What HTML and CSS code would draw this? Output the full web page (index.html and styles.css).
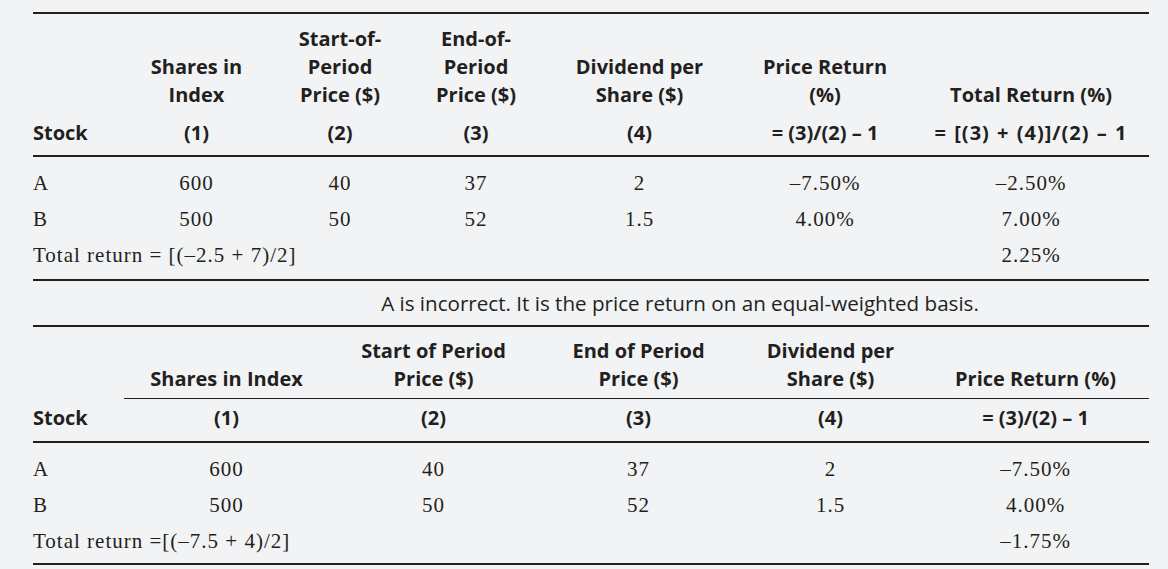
FILE: index.html
```html
<!DOCTYPE html>
<html lang="en">
<head>
<meta charset="utf-8">
<title>Index returns</title>
<link rel="stylesheet" href="styles.css">
</head>
<body>
<div class="page">
  <table class="tbl tbl-top">
    <colgroup>
      <col class="w90"><col class="w147"><col class="w140"><col class="w132"><col class="w195"><col class="w176"><col class="w236">
    </colgroup>
    <thead>
      <tr class="h1">
        <th></th>
        <th>Shares in<br>Index</th>
        <th>Start-of-<br>Period<br>Price ($)</th>
        <th>End-of-<br>Period<br>Price ($)</th>
        <th>Dividend per<br>Share ($)</th>
        <th>Price Return<br>(%)</th>
        <th>Total Return (%)</th>
      </tr>
      <tr class="h2">
        <th class="left">Stock</th>
        <th>(1)</th>
        <th>(2)</th>
        <th>(3)</th>
        <th>(4)</th>
        <th>= (3)/(2) – 1</th>
        <th class="wide">= [(3) + (4)]/(2) – 1</th>
      </tr>
    </thead>
    <tbody>
      <tr>
        <td class="left">A</td><td>600</td><td>40</td><td>37</td><td>2</td><td>–7.50%</td><td>–2.50%</td>
      </tr>
      <tr>
        <td class="left">B</td><td>500</td><td>50</td><td>52</td><td>1.5</td><td>4.00%</td><td>7.00%</td>
      </tr>
      <tr>
        <td class="left" colspan="6">Total return = [(–2.5 + 7)/2]</td><td>2.25%</td>
      </tr>
    </tbody>
  </table>

  <p class="note">A is incorrect. It is the price return on an equal-weighted basis.</p>

  <table class="tbl tbl-bottom">
    <colgroup>
      <col class="w91"><col class="w205"><col class="w209"><col class="w201"><col class="w183"><col class="w227">
    </colgroup>
    <thead>
      <tr class="h1">
        <th class="noline"></th>
        <th>Shares in Index</th>
        <th>Start of Period<br>Price ($)</th>
        <th>End of Period<br>Price ($)</th>
        <th>Dividend per<br>Share ($)</th>
        <th>Price Return (%)</th>
      </tr>
      <tr class="h2">
        <th class="left">Stock</th>
        <th>(1)</th>
        <th>(2)</th>
        <th>(3)</th>
        <th>(4)</th>
        <th>= (3)/(2) – 1</th>
      </tr>
    </thead>
    <tbody>
      <tr>
        <td class="left">A</td><td>600</td><td>40</td><td>37</td><td>2</td><td>–7.50%</td>
      </tr>
      <tr>
        <td class="left">B</td><td>500</td><td>50</td><td>52</td><td>1.5</td><td>4.00%</td>
      </tr>
      <tr>
        <td class="left" colspan="5">Total return =[(–7.5 + 4)/2]</td><td>–1.75%</td>
      </tr>
    </tbody>
  </table>
</div>
</body>
</html>
```

FILE: styles.css
```css
html, body {
  margin: 0;
  padding: 0;
  background: #f2f3f5;
}

body {
  color: #231f20;
  font-family: "Open Sans", "Liberation Sans", sans-serif;
}

.page {
  width: 1116px;
  padding: 12px 0 0 33px;
}

.tbl {
  width: 1116px;
  table-layout: fixed;
  border-collapse: separate;
  border-spacing: 0;
  border-top: 2px solid #231f20;
}

.w90 { width: 90px; }
.w147 { width: 147px; }
.w140 { width: 140px; }
.w132 { width: 132px; }
.w195 { width: 195px; }
.w176 { width: 176px; }
.w236 { width: 236px; }

.w91 { width: 91px; }
.w205 { width: 205px; }
.w209 { width: 209px; }
.w201 { width: 201px; }
.w183 { width: 183px; }
.w227 { width: 227px; }

.tbl th {
  font-family: "Open Sans", "Liberation Sans", sans-serif;
  font-weight: 700;
  font-size: 20px;
  line-height: 28px;
  text-align: center;
  vertical-align: bottom;
  padding: 0;
  white-space: nowrap;
}

.tbl th.wide {
  word-spacing: 1px;
  letter-spacing: 1px;
}

.tbl td {
  font-family: "Liberation Serif", "Times New Roman", serif;
  font-size: 21px;
  line-height: 36px;
  letter-spacing: 1px;
  text-align: center;
  vertical-align: top;
  padding: 0;
  white-space: nowrap;
}

.tbl .left {
  text-align: left;
}

/* top table header */
.tbl-top .h1 th {
  padding-top: 11px;
  padding-bottom: 10px;
}

.tbl-top .h2 th {
  padding-bottom: 8px;
  border-bottom: 2px solid #231f20;
}

/* bottom table header */
.tbl-bottom .h1 th {
  padding-top: 10px;
  padding-bottom: 5px;
  border-bottom: 1px solid #231f20;
}

.tbl-bottom .h1 th.noline {
  border-bottom: 1px solid transparent;
}

.tbl-bottom .h2 th {
  padding-top: 5px;
  padding-bottom: 9px;
  border-bottom: 2px solid #231f20;
}

.tbl tbody tr:first-child td {
  padding-top: 8px;
}

.tbl-top tbody tr:last-child td {
  padding-bottom: 6px;
  border-bottom: 2px solid #231f20;
}

.tbl-bottom tbody tr:last-child td {
  padding-bottom: 4px;
  border-bottom: 2px solid #231f20;
}

.note {
  margin: 0;
  height: 44px;
  line-height: 44px;
  font-size: 20.6px;
  font-weight: 400;
  text-align: center;
  padding-left: 178px;
  white-space: nowrap;
}
```
